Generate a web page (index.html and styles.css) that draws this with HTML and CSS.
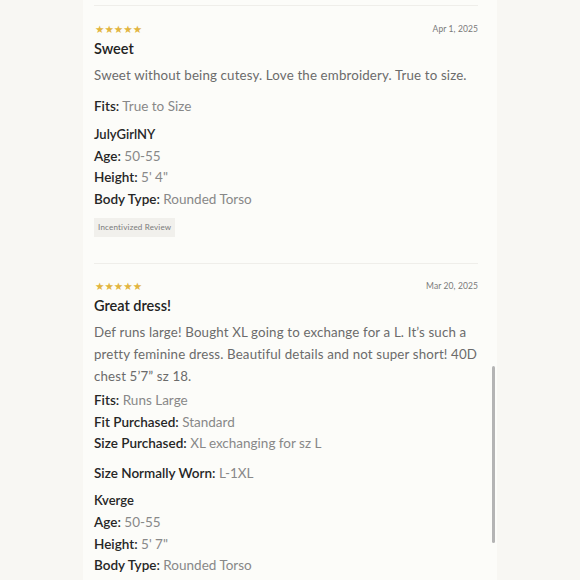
FILE: index.html
```html
<!DOCTYPE html>
<html lang="en">
<head>
<meta charset="utf-8">
<title>Reviews</title>
<link rel="stylesheet" href="styles.css">
</head>
<body>
<main class="panel">
  <article class="review">
    <div class="review__top">
      <span class="stars">★★★★★</span>
      <span class="date">Apr 1, 2025</span>
    </div>
    <h3 class="review__title">Sweet</h3>
    <p class="review__body review__body--spaced">Sweet without being cutesy. Love the embroidery. True to size.</p>
    <div class="fits">
      <p class="field"><span class="label">Fits:</span> <span class="value">True to Size</span></p>
    </div>
    <div class="author">
      <p class="author__name">JulyGirlNY</p>
      <p class="field"><span class="label">Age:</span> <span class="value">50-55</span></p>
      <p class="field"><span class="label">Height:</span> <span class="value">5' 4"</span></p>
      <p class="field"><span class="label">Body Type:</span> <span class="value">Rounded Torso</span></p>
    </div>
    <span class="badge">Incentivized Review</span>
  </article>
  <article class="review">
    <div class="review__top">
      <span class="stars">★★★★★</span>
      <span class="date">Mar 20, 2025</span>
    </div>
    <h3 class="review__title">Great dress!</h3>
    <p class="review__body">Def runs large! Bought XL going to exchange for a L. It’s such a pretty feminine dress. Beautiful details and not super short! 40D chest 5’7” sz 18.</p>
    <div class="fits">
      <p class="field"><span class="label">Fits:</span> <span class="value">Runs Large</span></p>
      <p class="field"><span class="label">Fit Purchased:</span> <span class="value">Standard</span></p>
      <p class="field"><span class="label">Size Purchased:</span> <span class="value">XL exchanging for sz L</span></p>
      <p class="field field--gap"><span class="label">Size Normally Worn:</span> <span class="value">L-1XL</span></p>
    </div>
    <div class="author">
      <p class="author__name">Kverge</p>
      <p class="field"><span class="label">Age:</span> <span class="value">50-55</span></p>
      <p class="field"><span class="label">Height:</span> <span class="value">5' 7"</span></p>
      <p class="field"><span class="label">Body Type:</span> <span class="value">Rounded Torso</span></p>
    </div>
  </article>
  <div class="scrollbar"></div>
</main>
</body>
</html>
```
FILE: styles.css
```css
* { box-sizing: border-box; }
html, body { margin: 0; padding: 0; }
body {
  background: #f8f7f3;
  font-family: Lato, "Open Sans", sans-serif;
  height: 580px;
  overflow: hidden;
}
.panel {
  position: relative;
  width: 414px;
  margin: 0 auto;
  height: 580px;
  overflow: hidden;
  background: #fcfcf9;
  padding: 5px 19px 0 11px;
}
.review {
  border-top: 1px solid #efeeea;
  padding-top: 16px;
  padding-bottom: 26px;
}
.review + .review { padding-top: 15px; }
.review__top {
  display: flex;
  justify-content: space-between;
  align-items: center;
  height: 14px;
}
.stars {
  color: #e2b540;
  font-family: "DejaVu Sans", sans-serif;
  font-size: 10.5px;
  letter-spacing: 0;
  margin-left: 1px;
}
.date {
  font-size: 8.5px;
  color: #7a7a7a;
  letter-spacing: 0.1px;
}
.review__title {
  margin: 3px 0 0;
  font-size: 14.5px;
  line-height: 20px;
  font-weight: 600;
  color: #222;
  letter-spacing: 0;
}
.review__body {
  margin: 5px 0 0;
  font-size: 13.3px;
  line-height: 22px;
  color: #6b6b6b;
  letter-spacing: 0.15px;
}
.review__body--spaced { margin-bottom: 10px; }
.fits { margin-top: 3px; }
.field {
  margin: 0;
  font-size: 13.5px;
  line-height: 21.5px;
  letter-spacing: 0;
}
.field--gap { margin-top: 8px; }
.label { color: #262626; font-weight: 600; }
.value { color: #888; }
.author { margin-top: 6px; }
.author__name {
  margin: 0 0 2px;
  font-size: 13px;
  line-height: 20px;
  font-weight: 600;
  color: #262626;
}
.badge {
  display: inline-block;
  margin-top: 8px;
  background: #f1f0ec;
  color: #7a7a7a;
  font-size: 8px;
  letter-spacing: 0.2px;
  padding: 0 4px;
  line-height: 19px;
}
.scrollbar {
  position: absolute;
  left: 409px;
  top: 366px;
  width: 3px;
  height: 177px;
  background: #b4b4b4;
  border-radius: 2px;
}
```
